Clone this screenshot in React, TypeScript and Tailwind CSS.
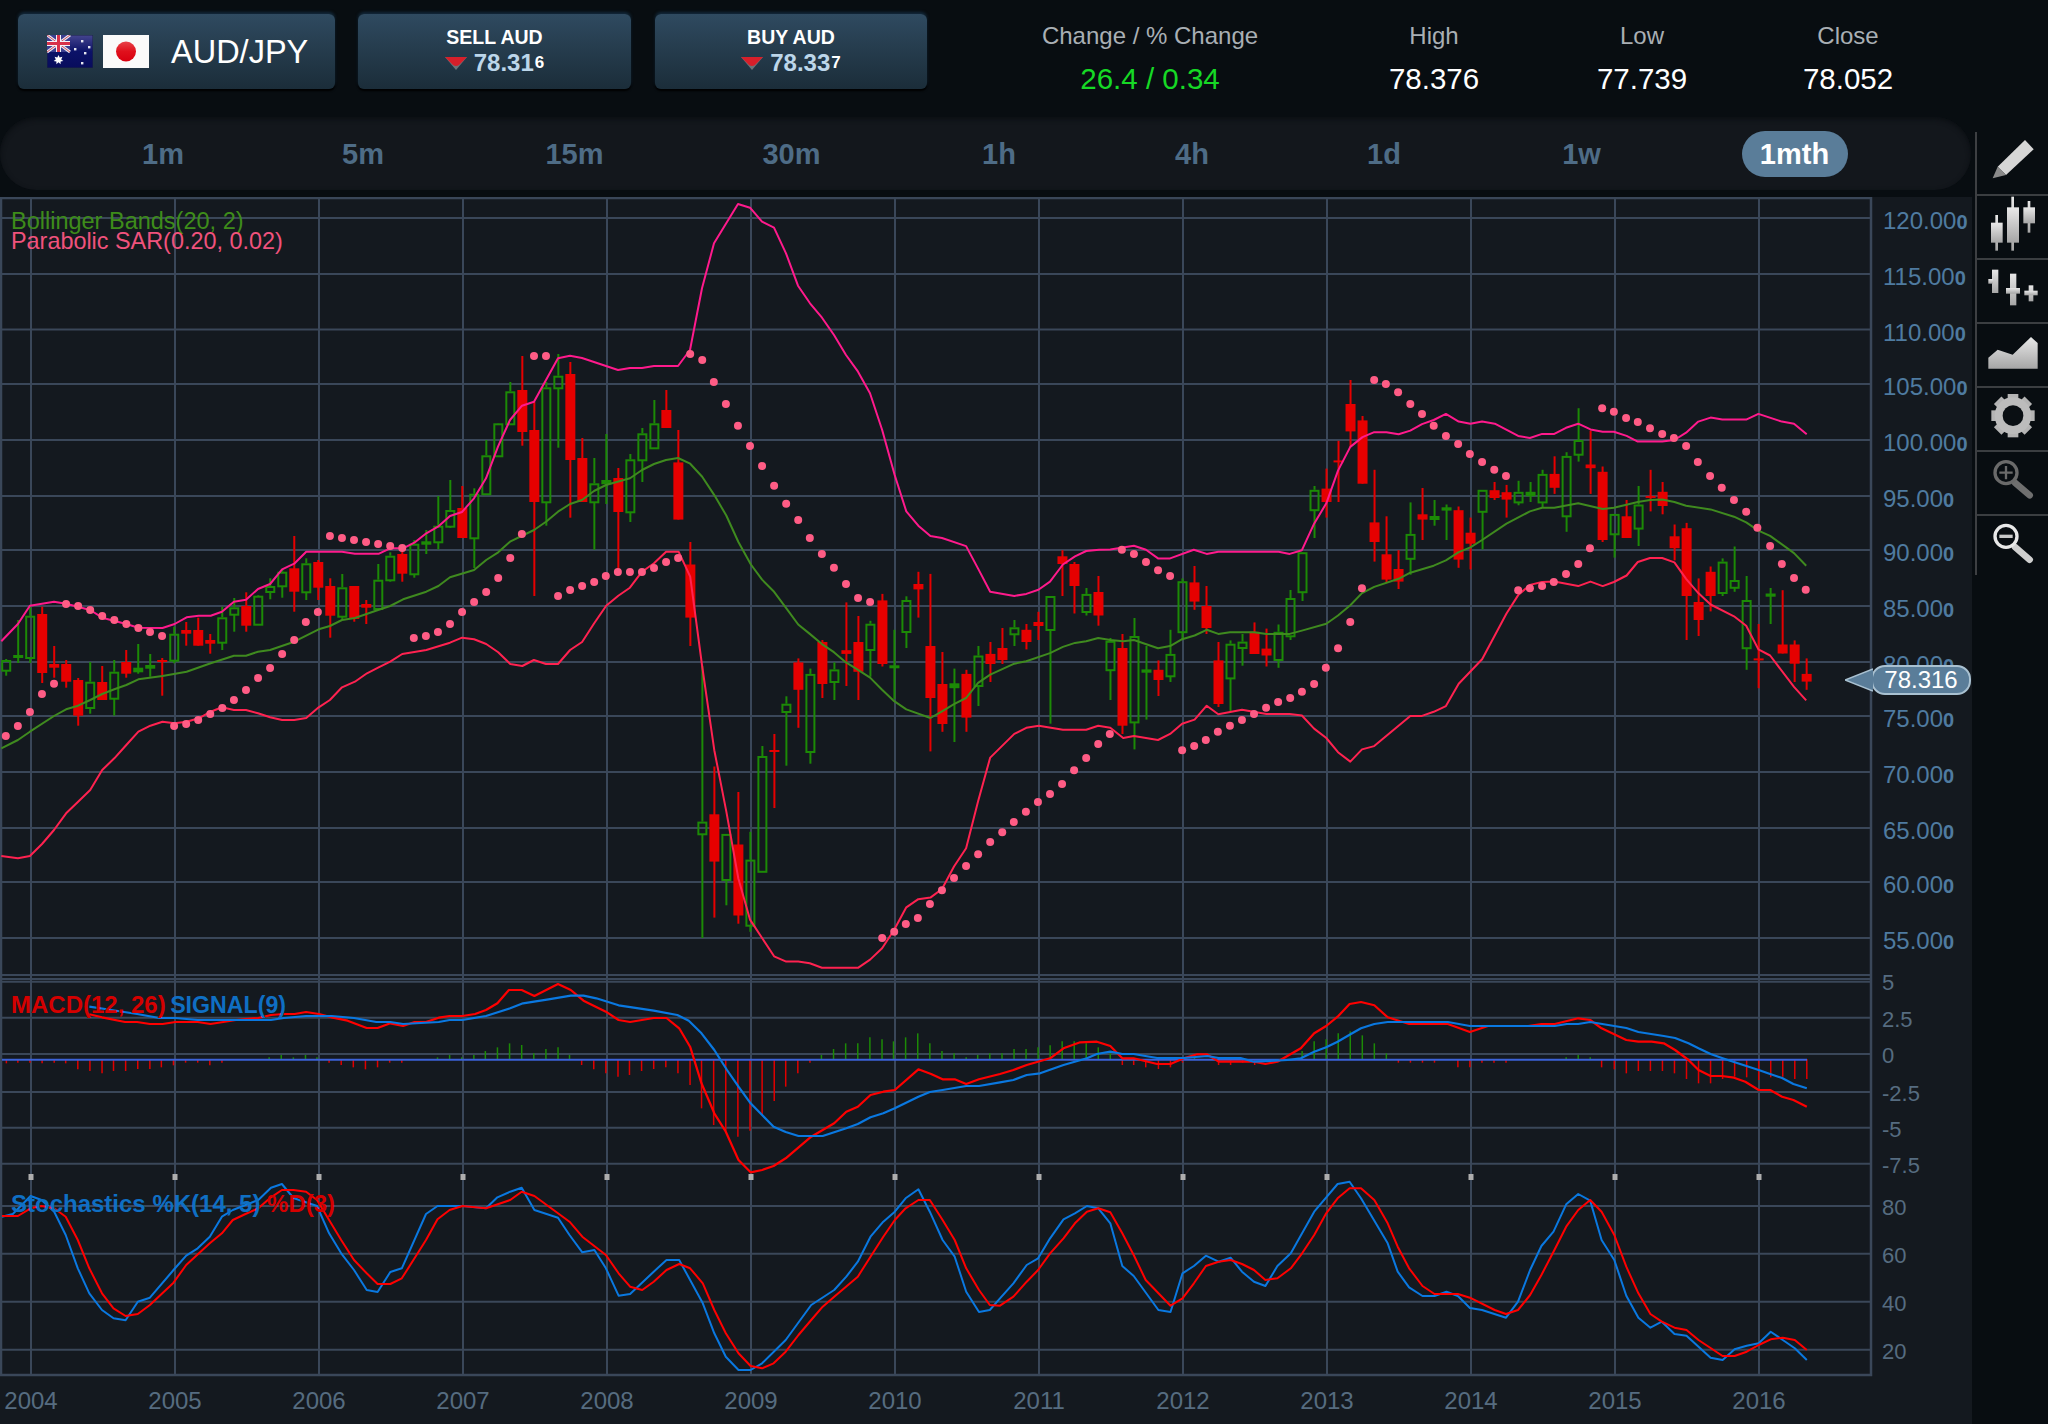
import React from "react";

type Pt = [number, number];

// helpers: the series below were read off crops of the chart, each with its own origin and scale
const pts = (ox: number, oy: number, sx: number, sy: number) => (flat: number[]): Pt[] => {
  const out: Pt[] = [];
  for (let i = 0; i < flat.length; i += 2) out.push([ox + flat[i] / sx, oy + flat[i + 1] / sy]);
  return out;
};
const a = pts(0, 500, 2.24, 3);
const b = pts(600, 340, 2.24, 2.45);
const c = pts(1250, 340, 1.965, 2.45);
const d = pts(330, 330, 3, 3);
const e = pts(660, 195, 3, 3);
const f = pts(0, 960, 1.568, 3);
const g = pts(1000, 960, 1.496, 3);

const toPath = (p: Pt[]) => p.map(([x, y]) => `${x.toFixed(1)},${y.toFixed(1)}`).join(" ");

const BAND_UPPER: Pt[] = [
  ...a([3,424,40,372,67,317,121,305,148,311,202,330,229,353,283,372,310,383,364,384,391,372,418,352,445,347,472,347,497,335,524,305,551,299,578,267,605,252,632,208,659,191,686,155,766,155,795,161,849,161,874,145,903,145,928,128,955,100]),
  ...d([324,590,360,558,396,546,432,505,468,445,504,350,540,270,576,227,612,215,648,150,684,85,720,77,756,84,864,120,900,114,936,114,972,108,1044,108]),
  ...e([90,465,126,280,162,145,234,27,270,38,306,80,342,98,378,175,414,272,450,325,486,368,522,420,558,480,594,530,630,595]),
  ...b([632,220,660,330,686,420,713,455,740,480,766,485,820,505,847,560,874,617,928,627,955,622,982,612,1008,592,1037,550,1064,530,1089,517,1118,514,1143,513,1196,504,1223,514,1250,535,1277,535,1330,514,1359,524,1385,519,1520,519,1545,524]),
  ...c([102,515,126,450,150,400,173,320,197,262,221,238,244,226,268,226,292,231,315,222,338,206,361,196,385,181,410,200,433,205,456,200,481,205,527,235,550,240,574,230,598,230,621,215,645,205,669,219,693,225,715,225,740,235,762,249,810,249,834,245,857,227,881,200,905,190,928,195,975,195,999,181,1045,200,1069,205,1094,231]),
];

const BAND_MID: Pt[] = [
  ...a([3,745,40,720,67,695,121,648,148,628,175,617,202,600,229,582,256,568,283,555,310,538,364,528,418,515,472,490,524,467,551,467,578,455,605,450,659,425,714,388,739,378,766,360,795,354,847,330,874,318,903,298,955,275,982,258,1008,232,1062,210,1089,180,1116,157]),
  ...d([540,635,612,600,648,575,684,545,720,522,756,510,792,483,828,465,900,445,936,420,972,402,1008,390,1044,384]),
  ...b([202,303,229,335,256,380,283,430,310,495,338,550,363,587,390,617,417,657,444,697,470,720,497,745,524,765,551,790,578,808,605,827,632,857,659,885,686,905,740,926,766,910,793,892,820,877,847,840,874,820,928,793,955,787,1008,767,1037,752,1064,742,1089,738,1116,730,1143,735,1172,738,1196,735,1250,755,1277,750,1304,733,1332,724,1359,710,1385,720,1411,716,1465,716,1493,720,1545,720]),
  ...c([102,712,150,695,173,675,197,650,220,620,244,605,292,585,315,570,361,553,385,540,410,520,433,508,456,490,504,450,550,420,574,411,598,411,645,400,693,414,715,411,762,397,786,392,810,391,834,397,857,406,905,415,951,433,975,447,999,467,1022,480,1069,522,1093,553]),
];

const BAND_LOWER: Pt[] = [
  ...a([3,1068,40,1075,67,1068,94,1032,121,990,148,940,175,905,202,870,229,810,256,775,283,735,310,695,337,677,364,665,391,670,418,665,445,655,472,635,497,622,524,630,551,630,578,640,605,652,632,660,659,660,686,654,714,622,739,600,766,562,795,545,822,520,847,503,874,485,901,462,955,450,1008,428,1035,413,1062,418,1089,432,1116,457,1143,492,1170,498,1196,480,1223,492,1250,492,1277,450,1304,426,1331,370,1358,317,1385,287,1411,263,1438,215,1465,190,1492,155,1520,155]),
  ...b([202,580,229,800,256,1005,283,1155,310,1320,336,1420,363,1465,390,1510,417,1523,444,1523,470,1527,497,1538,578,1538,605,1518,632,1490,659,1445,686,1390,713,1370,740,1366,766,1345,793,1290,820,1245,847,1130,874,1023,928,965,955,950,983,945,1037,955,1089,955,1116,945,1143,950,1172,975,1196,970,1250,980,1277,965,1304,940,1332,930,1359,896,1385,917,1438,906,1493,916,1545,916]),
  ...c([102,920,126,952,150,975,173,1010,197,1033,220,1003,244,995,315,921,338,921,361,911,385,897,410,842,456,782,504,670,527,625,550,600,574,593,598,592,645,603,669,592,693,603,715,593,740,577,762,544,786,534,810,534,834,545,857,585,881,620,905,648,951,677,975,700,999,758,1022,773,1069,850,1093,883]),
];

const SAR: Pt[] = [
  ...a([13,708,40,678,67,636,94,582,121,551,148,312,175,318,202,330,229,348,256,360,283,372,310,384,336,396,363,408,390,678,417,672,444,660,471,642,498,624,524,600,551,570,578,534,605,504,632,462,659,420,685,366,712,336,739,108,766,114,793,120,820,126,847,132,874,138,901,144,927,414,954,408,981,396,1008,372,1035,336,1062,306,1089,276,1116,234,1143,174,1169,102,1250,288,1277,270,1304,258,1331,246,1357,228,1384,216,1411,216,1438,216,1465,204,1492,186,1519,174]),
  ...d([612,78,648,78]),
  ...b([202,34,229,49,255,103,282,157,309,210,336,260,363,309,390,357,417,401,444,441,470,485,497,524,524,558,551,598,578,632,605,642,632,1465,659,1450,685,1431,712,1416,739,1382,766,1348,793,1318,820,1289,847,1260,874,1230,901,1206,927,1181,954,1156,981,1132,1008,1112,1035,1088,1062,1054,1089,1024,1116,990,1142,965,1169,514,1196,524,1223,544,1250,564,1277,578,1304,1005,1331,995,1357,980,1384,960,1411,945,1438,931,1465,916,1492,901,1519,887,1546,877]),
  ...c([102,862,126,843,149,803,173,755,197,691,220,608,244,98,267,108,291,128,315,157,338,181,361,210,385,235,409,255,432,279,456,299,480,318,503,333,527,613,550,608,574,603,597,593,621,573,645,549,668,510,692,167,715,176,739,191,762,201,786,216,810,230,833,240,857,260,880,299,904,333,927,362,951,392,975,421,997,460,1022,505,1045,549,1069,583,1092,612]),
];

const MACD: Pt[] = [
  ...f([140,163,160,172,196,186,215,186,235,192,255,192,275,186,310,186,330,192,370,180,405,174,425,165,445,162,462,162,480,156,500,162,520,172,545,182,575,204,592,204,612,190,632,198,650,186,668,186,688,173,705,168,725,168,745,162,762,150,780,130,798,90,818,90,838,108,875,72,895,90,915,122,950,155,970,180,988,186,1025,174,1045,174,1065,205,1082,260,1100,370,1120,460,1138,515,1158,600,1177,637,1195,630,1213,618,1232,595,1272,530,1308,490,1327,455,1345,440,1365,405,1385,395,1403,390,1440,328,1460,342,1478,358,1497,358,1515,372,1535,358,1568,342]),
  ...g([20,330,40,315,75,295,95,265,120,247,145,245,165,258,183,295,200,295,235,312,255,312,275,295,295,283,310,283,327,305,380,305,397,312,415,305,450,265,470,220,488,198,505,170,523,132,540,126,560,136,580,172,612,192,670,192,703,216,730,198,790,198,810,192,830,192,865,175,883,180,900,205,937,240,955,245,975,245,993,250,1010,270,1030,300,1045,330,1063,348,1080,348,1098,353,1115,365,1135,390,1152,390,1170,410,1187,420,1207,440]),
];

const SIGNAL: Pt[] = [
  ...f([140,140,175,150,215,162,250,174,275,174,310,180,425,180,445,174,480,168,520,168,555,174,590,186,612,186,632,192,688,186,705,180,725,180,762,168,800,145,820,130,860,118,895,107,915,107,935,115,970,136,1025,152,1062,165,1080,182,1100,220,1120,270,1140,330,1158,380,1177,430,1195,465,1213,500,1232,516,1252,528,1290,528,1327,505,1345,492,1365,472,1385,460,1403,445,1440,410,1458,396,1478,390,1515,378,1535,378,1568,367]),
  ...g([20,360,40,345,60,340,95,315,130,295,145,282,165,275,183,282,200,282,235,294,275,294,310,288,327,294,360,294,380,305,430,300,450,295,470,275,488,262,505,245,525,222,540,205,560,192,580,186,670,186,703,198,830,198,848,192,865,192,883,186,937,204,955,216,993,228,1010,234,1030,250,1045,265,1063,282,1080,294,1098,306,1135,330,1152,342,1170,354,1187,372,1207,385]),
];

const HISTOGRAM: Pt[] = [
  ...f([10,310,28,308,47,308,66,310,85,308,103,310,122,328,141,333,160,340,178,333,197,333,216,327,235,327,253,322,272,316,291,308,310,308,329,316,348,308,422,292,441,285,460,292,479,285,497,292,516,308,535,315,554,322,573,328,592,322,611,308,630,308,686,292,705,285,724,292,743,285,761,273,780,262,799,250,818,255,837,280,856,267,875,262,893,285,912,315,931,328,950,340,969,350,987,345,1006,333,1025,327,1044,322,1063,340,1082,375,1100,445,1119,495,1138,512,1157,530,1176,512,1195,465,1214,423,1232,380,1251,340,1270,308,1288,285,1307,267,1326,250,1345,250,1364,232,1383,238,1401,244,1420,232,1439,220,1458,250,1477,273,1496,280,1515,292,1533,285,1552,280]),
  ...g([3,280,21,267,39,267,57,262,75,256,93,244,111,244,129,250,147,262,165,280,183,315,200,315,218,322,237,327,255,322,273,308,291,292,327,315,345,315,363,308,381,315,452,273,470,244,488,238,506,220,524,214,542,226,560,250,578,280,596,308,614,308,632,308,650,308,685,322,703,322,721,308,739,308,757,308,847,292,865,285,883,292,900,322,919,328,937,340,955,333,973,333,991,333,1009,340,1027,357,1045,370,1063,370,1081,357,1099,350,1117,352,1135,360,1153,352,1171,350,1189,357,1207,357]),
];

const STOCH_K: Pt[] = [
  ...f([3,770,20,762,48,708,65,720,85,755,103,825,122,925,140,1000,160,1050,178,1075,197,1081,216,1025,235,1013,272,930,292,887,310,865,329,830,348,770,365,750,405,720,425,683,442,672,460,714,497,738,516,820,535,880,555,930,575,990,592,996,612,936,630,925,668,762,686,738,725,738,762,745,780,712,800,695,818,683,838,750,875,773,893,825,913,877,932,870,950,925,970,1007,988,1002,1025,935,1045,900,1065,900,1102,1030,1120,1120,1138,1190,1158,1230,1177,1230,1195,1210,1232,1140,1272,1035,1308,990,1327,950,1345,905,1365,830,1385,785,1403,755,1420,715,1440,688,1458,755,1478,840,1497,890,1515,995,1535,1056,1552,1050,1568,1015]),
  ...g([20,970,40,915,57,895,75,835,95,778,112,760,130,738,147,745,165,790,183,918,200,948,237,1050,255,1056,273,940,290,918,308,887,327,905,345,893,362,935,380,965,397,978,415,918,435,880,470,755,505,672,523,665,540,715,580,850,595,935,612,982,632,1008,650,1008,668,995,685,1008,703,1044,721,1050,757,1073,775,1025,793,930,810,858,828,815,847,733,865,702,883,722,900,840,919,900,937,1007,955,1073,973,1103,990,1085,1009,1122,1027,1127,1063,1193,1081,1200,1099,1168,1117,1157,1135,1150,1153,1115,1171,1140,1189,1165,1207,1200]),
];

const STOCH_D: Pt[] = [
  ...f([3,768,28,768,48,745,65,738,85,745,103,770,122,840,140,925,160,1000,178,1045,197,1068,216,1062,235,1035,272,968,292,915,329,850,348,820,365,780,385,762,405,745,425,712,442,690,460,690,480,695,497,720,516,780,535,840,555,900,575,940,592,972,612,972,630,955,650,895,668,840,686,778,705,750,725,738,762,745,800,720,818,695,838,708,875,760,893,785,913,830,950,885,970,940,988,980,1007,990,1025,965,1045,930,1065,912,1082,925,1102,970,1120,1050,1138,1120,1158,1180,1177,1218,1195,1225,1213,1210,1232,1175,1252,1125,1272,1080,1290,1040,1308,1010,1345,950,1365,890,1385,830,1403,780,1420,745,1440,720,1458,720,1478,780,1497,840,1515,925,1535,990,1552,1035,1568,1037]),
  ...g([20,1010,40,965,57,930,75,880,95,835,112,790,130,755,147,745,165,757,183,820,200,885,218,960,255,1037,273,1015,290,970,308,918,327,905,345,900,362,912,380,930,397,960,415,955,435,925,452,880,470,825,488,760,505,715,523,685,540,685,560,720,580,790,595,860,612,925,632,978,650,1002,685,1002,703,1013,740,1050,757,1062,775,1050,793,1005,810,945,828,875,847,800,865,750,883,720,900,755,919,825,937,920,955,1000,973,1062,990,1085,1009,1103,1027,1110,1045,1140,1081,1188,1099,1188,1117,1175,1135,1155,1153,1138,1171,1133,1189,1140,1207,1170]),
];

// [green?, high, body top, body bottom, low], one per month from Nov 2003
const CANDLES: [number, number, number, number, number][] = [
  [1,659,660,670.7,675.7],[1,620,655,657,663],[1,607,615.7,658,663],[0,606.7,614,673,683],[0,646,664,667.7,677.7],[0,660,664,681.7,687.7],[0,678,680,715.7,725.7],[1,662,681.7,708,713.7],[0,666,682,700,700],[1,660,671.7,698.7,715.7],
  [0,650,662,673.7,677.7],[1,644,667.7,672.3,673.7],[1,654,665,668.7,676.7],[0,658,660,661.7,695.7],[1,626.7,633.7,660.7,663.3],[0,622,630,633.7,645.7],[0,617.7,630,645.7,645.7],[0,634,640,643.7,653.7],[1,606.7,617.3,642.7,650],[1,598,607.3,614.7,631.7],
  [0,592.3,606,625.7,631.7],[1,595,595.7,624.7,624.7],[1,578.3,586,592,599.3],[1,569,571.7,586.3,597.7],[0,536,568.3,591.7,611.7],[1,558.3,563.3,592.3,600],[0,560,562,587.7,600],[0,578.3,586,615.7,637.7],[1,574,587.3,616.7,619.3],[0,586,586,619,621.7],
  [0,600,604,607.7,624],[1,564,579.7,609,609],[1,552.3,555.7,580.3,581.7],[0,552,554,573.7,581.7],[1,540,543.7,574.3,577.7],[1,530,541.3,544.7,554],[1,496,525.7,542.3,549.3],[1,480,510,526.7,528],[0,486,508,538,538],[1,488.3,493.7,538.3,568],
  [1,440,455.3,494.3,494.3],[1,423,423.3,456.3,456.3],[1,382,391.3,424.3,424.3],[0,356,390,432,445.7],[0,402,430,502,596],[1,382,387.3,502.3,525.7],[1,354,375.7,388.3,447.7],[0,362,374,460,517.7],[0,438,458,502,502],[1,458,483.3,502.3,549.7],
  [1,434,480,484.3,504],[0,468,478,512,568.6],[1,454,459.3,512.3,522],[1,428,433.3,460.3,482],[1,400,423.3,448.3,448.3],[0,390,410,428,428],[0,430,462.4,519.6,519.6],[0,542,564.5,617.6,646],[1,666,821.6,834.3,938],[0,766.5,814.3,861.6,917.6],
  [1,833.9,833.9,880,905.3],[0,792,844.5,915.5,923.7],[1,831.8,859.6,925.7,931.8],[1,746,756,871.8,871.8],[0,734,750,751.4,808],[1,696.3,703.7,712,765.7],[0,658.4,662.4,689.8,727.8],[1,668.6,673.9,752,763.7],[0,640,642,684,698],[1,662.4,669.4,682,700],
  [0,602.4,650.2,653.9,686],[0,616,642,671.8,700],[1,620.8,623.7,650,676.7],[0,593.9,600.4,664,666.5],[1,629.8,665.3,666.5,699],[1,596.3,600,632,648],[0,571.8,584,589.4,617.6],[0,573.9,646,698,751.4],[0,652,684,724,731.8],[1,668.6,683.3,688.2,742],
  [0,669.8,673.9,717.6,731.8],[1,646,655.5,686,706],[0,642,653.9,664,682],[0,628,648,660,664],[1,620,627.3,634.3,646],[0,624,629.8,642,649.4],[0,611.8,622,626,640],[1,596,596,630,723.7],[0,550.2,556.3,564,596],[0,562,564,586,613.5],
  [1,588,593.9,612,615.5],[0,576,592,615.5,625.7],[1,638,640.8,670.2,700],[0,634,648,725.7,734],[1,618,636,722.4,749.4],[1,646,669.4,672.7,719.6],[0,660.4,669.8,680,696],[1,629.8,653.9,676.3,682],[1,578.4,581.2,632.2,640],[0,566,582.4,601.6,609.8],
  [0,586,606,628,634],[0,642,660.4,704,707],[1,640.4,643.7,678.4,711.4],[1,634,641.6,648,665.7],[0,622.4,631.8,654,654],[0,628.6,648.6,655.5,666.5],[1,624.5,631.8,660,667.8],[1,590,598,636.3,640],[1,552,552.2,592.2,601],[1,486,489.8,510.2,538],
  [0,468.6,488.6,502,517.6],[0,440.8,460.4,461.2,502],[0,380,404,431.4,447],[0,416,420.4,483.7,483.7],[0,469.8,522.4,542,561.6],[0,516.3,554.3,579.6,582.9],[0,550.2,569,581.6,589],[1,502.4,533.9,558.8,574.7],[0,488,514.3,519.6,540],[1,500,516,520,525.7],
  [1,504.5,507.3,510.6,540],[0,506.5,510.2,559.6,567.8],[0,517.6,532.7,543.7,569.4],[1,489.8,489.8,511.8,549.4],[0,482,490.2,498,500],[0,484.9,492.2,499.6,517.6],[1,480.8,491.8,502.4,505.3],[1,482,491.8,496.3,502],[1,469.8,473.9,502.4,507.3],[0,456.3,473.9,487.8,493.9],
  [1,452.2,455.9,516.3,531.8],[1,408.2,440,454.7,461.6],[0,430.6,464.5,468.2,493.9],[0,466.5,471.8,540,542],[1,513.9,513.9,534.3,557.6],[0,500,516.3,538,538],[1,486,504.5,528.6,546],[0,469.8,495.9,497.6,511.4],[0,482,491.8,506,514.3],[0,524.5,536.3,548.2,560.4],
  [0,522.9,528.2,596,640],[0,578.4,602,620,636],[0,566.5,571.8,596,611.4],[1,558.4,561.6,593,596],[1,546.5,580,587.8,591.8],[1,576,600,648.2,669.8],[0,624,658.4,659.2,688.2],[1,588,593.5,596.7,624],[0,590.2,644.5,653.5,653.5],[0,640.4,644.5,663.7,682],
  [0,658.4,673.9,681.6,689.8],
];

const YEARS = [2004, 2005, 2006, 2007, 2008, 2009, 2010, 2011, 2012, 2013, 2014, 2015, 2016];
const yearX = (i: number) => 31 + 144 * i;

const PRICE_TICKS: [string, number][] = [
  ["120.00", 218], ["115.00", 274], ["110.00", 329.5], ["105.00", 384], ["100.00", 440], ["95.00", 496], ["90.00", 550],
  ["85.00", 606], ["80.00", 662], ["75.00", 716], ["70.00", 772], ["65.00", 828], ["60.00", 882], ["55.00", 938],
];
const LOWER_TICKS: [string, number, boolean][] = [
  ["5", 981, false], ["2.5", 1017.7, true], ["0", 1054, true], ["-2.5", 1092, true], ["-5", 1127.7, true], ["-7.5", 1163.7, true],
  ["80", 1206, true], ["60", 1253.7, true], ["40", 1301.7, true], ["20", 1349.7, true],
];
const EXTRA_LINES = [975, 979, 981.7];

const TABS = [
  { label: "1m", width: "w-[200px]" },
  { label: "5m", width: "w-[200px]" },
  { label: "15m", width: "w-[223px]" },
  { label: "30m", width: "w-[211px]" },
  { label: "1h", width: "w-[204px]" },
  { label: "4h", width: "w-[182px]" },
  { label: "1d", width: "w-[202px]" },
  { label: "1w", width: "w-[193px]" },
  { label: "1mth", width: "w-[233px]", active: true },
];

function AussieFlag() {
  return (
    <svg viewBox="0 0 46 33" className="w-[46px] h-[33px] shrink-0">
      <defs>
        <linearGradient id="au-bg" x1="0" y1="0" x2="0" y2="1">
          <stop offset="0" stopColor="#45458f" />
          <stop offset="0.5" stopColor="#0c1268" />
          <stop offset="1" stopColor="#080c5c" />
        </linearGradient>
      </defs>
      <rect width="46" height="33" fill="url(#au-bg)" stroke="#1a2440" />
      <rect width="23" height="17" fill="#3c3f90" />
      <path d="M0 0 L23 17 M23 0 L0 17" stroke="#e8e8f0" strokeWidth="3" />
      <path d="M0 0 L23 17 M23 0 L0 17" stroke="#d05060" strokeWidth="1" />
      <path d="M11.5 0 V17 M0 8.5 H23" stroke="#f4f4f8" strokeWidth="5" />
      <path d="M11.5 0 V17 M0 8.5 H23" stroke="#d8324a" strokeWidth="3" />
      <path d="M11.5 20 l1.2 2.6 2.7 -0.8 -1.2 2.6 2.2 1.6 -2.8 0.4 0 2.8 -2.1 -1.9 -2.1 1.9 0 -2.8 -2.8 -0.4 2.2 -1.6 -1.2 -2.6 2.7 0.8z" fill="#fff" />
      <g fill="#e6e6f0">
        <rect x="34" y="5" width="2.4" height="2.4" />
        <rect x="27" y="13" width="2.4" height="2.4" />
        <rect x="41" y="11" width="2.4" height="2.4" />
        <rect x="37" y="17" width="2.4" height="2.4" />
        <rect x="34" y="27" width="2.4" height="2.4" />
      </g>
    </svg>
  );
}

function JapanFlag() {
  return (
    <svg viewBox="0 0 46 33" className="w-[46px] h-[33px] shrink-0">
      <defs>
        <linearGradient id="jp-dot" x1="0" y1="0" x2="0" y2="1">
          <stop offset="0" stopColor="#e8434a" />
          <stop offset="0.5" stopColor="#e0101c" />
          <stop offset="1" stopColor="#d80010" />
        </linearGradient>
      </defs>
      <rect width="46" height="33" fill="#fafafa" />
      <circle cx="23" cy="16.5" r="10" fill="url(#jp-dot)" />
    </svg>
  );
}

function DownArrow() {
  return (
    <svg viewBox="0 0 22 13" className="w-[22px] h-[13px] shrink-0">
      <path d="M0 0 H22 L11 13 Z" fill="#6b7278" />
      <path d="M0 0 H22 L14 8 Q11 10 8 8 Z" fill="#d71f2a" />
    </svg>
  );
}

function QuoteButton({ label, price, tail, width, ml }: { label: string; price: string; tail: string; width: string; ml: string }) {
  return (
    <div className={`${width} ${ml} h-[75px] rounded-[6px] bg-gradient-to-b from-[#2f4a60] to-[#1b2d39] shadow-[0_-2px_3px_#12283a,0_2px_2px_#000] flex flex-col items-center pt-[13px]`}>
      <div className="text-[19.5px] leading-[20px] font-bold text-white">{label}</div>
      <div className="flex items-center mt-[3px] leading-[26px]">
        <DownArrow />
        <span className="ml-[7px] text-[24px] font-bold text-[#bcd6ea]">{price}</span>
        <span className="ml-[1px] text-[17px] font-bold text-white">{tail}</span>
      </div>
    </div>
  );
}

function Stat({ label, value, width, ml, valueClass = "text-white" }: { label: string; value: string; width: string; ml: string; valueClass?: string }) {
  return (
    <div className={`${width} ${ml} flex flex-col items-center pt-[7px]`}>
      <div className="text-[24px] leading-[30px] text-[#a9afb4]">{label}</div>
      <div className={`mt-[13px] text-[29.5px] leading-[30px] ${valueClass}`}>{value}</div>
    </div>
  );
}

function ChartSvg() {
  return (
    <svg viewBox="0 197 1972 1227" className="w-[1972px] h-[1227px] block">
      <g stroke="#3a4759" strokeWidth="2" fill="none">
        {PRICE_TICKS.map(([, y]) => <line key={y} x1="0" x2="1871" y1={y} y2={y} />)}
        {LOWER_TICKS.filter((t) => t[2]).map(([, y]) => <line key={y} x1="0" x2="1871" y1={y} y2={y} />)}
        {EXTRA_LINES.map((y) => <line key={y} x1="0" x2="1871" y1={y} y2={y} />)}
        {YEARS.map((_, i) => <line key={i} x1={yearX(i)} x2={yearX(i)} y1="197" y2="1375" />)}
        <rect x="1" y="198" width="1870" height="1177" strokeWidth="2.5" />
      </g>

      {CANDLES.map(([up, hi, top, bot, lo], i) => {
        const x = 6.2 + 12.003 * i;
        if (up && bot - top < 5) {
          return (
            <g key={i} fill="#1c8a06">
              <rect x={x - 1} y={hi} width="2" height={lo - hi} />
              <rect x={x - 5} y={top} width="10" height={Math.max(bot - top, 3)} />
            </g>
          );
        }
        if (up) {
          return (
            <g key={i} fill="none" stroke="#1c8a06" strokeWidth="2">
              <line x1={x} x2={x} y1={hi} y2={top} />
              <line x1={x} x2={x} y1={bot} y2={lo} />
              <rect x={x - 4} y={top + 1} width="8" height={bot - top - 1} />
            </g>
          );
        }
        return (
          <g key={i} fill="#e60000">
            <rect x={x - 1} y={hi} width="2" height={lo - hi} />
            <rect x={x - 5} y={top} width="10" height={Math.max(bot - top, 2)} />
          </g>
        );
      })}

      <g fill="none" strokeWidth="2" strokeLinejoin="round">
        <polyline points={toPath(BAND_MID)} stroke="#3f8a1f" />
        <polyline points={toPath(BAND_UPPER)} stroke="#ff1a8c" />
        <polyline points={toPath(BAND_LOWER)} stroke="#ff2250" />
      </g>
      {SAR.map(([x, y], i) => <circle key={i} cx={x} cy={y} r="4" fill="#ff5c85" />)}

      {HISTOGRAM.map(([x, y], i) => (
        <line key={i} x1={x} x2={x} y1={y} y2="1059" stroke={y < 1059 ? "#1c8a06" : "#e00000"} strokeWidth="1.5" />
      ))}
      <line x1="2" x2="1807" y1="1059.7" y2="1059.7" stroke="#3b62d8" strokeWidth="2" />
      <g fill="none" strokeLinejoin="round">
        <polyline points={toPath(MACD)} stroke="#ff0000" strokeWidth="2.2" />
        <polyline points={toPath(SIGNAL)} stroke="#0a78e0" strokeWidth="2.2" />
        <polyline points={toPath(STOCH_K)} stroke="#0a78e0" strokeWidth="2" />
        <polyline points={toPath(STOCH_D)} stroke="#ff0000" strokeWidth="2" />
      </g>

      {YEARS.map((_, i) => <rect key={i} x={yearX(i) - 2.5} y="1174" width="5" height="6" fill="#aeaeae" />)}

      {PRICE_TICKS.map(([t, y]) => (
        <text key={t} x="1883" y={y + 11} className="fill-[#4f7ba0] text-[24px]">
          {t}
          <tspan className="font-bold text-[20px]">0</tspan>
        </text>
      ))}
      {LOWER_TICKS.map(([t, y]) => (
        <text key={t} x="1882" y={y + 9} className="fill-[#566c80] text-[22px]">{t}</text>
      ))}
      {YEARS.map((year, i) => (
        <text key={year} x={yearX(i)} y="1409" textAnchor="middle" className="fill-[#566c80] text-[24px]">{year}</text>
      ))}
    </svg>
  );
}

function PriceFlag() {
  return (
    <div className="absolute left-[1845px] top-[468px] flex items-center">
      <svg viewBox="0 0 28 24" className="w-[28px] h-[24px] -mr-[2px] relative z-10">
        <path d="M0 12 L28 1 V23 Z" fill="#5a7d99" />
        <path d="M28 1 L0 12 L28 23" fill="none" stroke="#a9c1d1" strokeWidth="1.5" />
      </svg>
      <div className="w-[100px] h-[30px] rounded-[14px] border-2 border-[#a9c1d1] bg-[#5a7d99] text-white text-[24px] leading-[26px] text-center">78.316</div>
    </div>
  );
}

const iconFill = "url(#tool-grey)";

function ToolIcon({ top, children }: { top: number; children: React.ReactNode }) {
  return (
    <div className="w-full h-[64px] border-b-2 border-[#3b3e41] flex items-center justify-center last:border-b-0">
      <svg viewBox={`306 ${top} 180 186`} className="w-[60px] h-[62px] block">
        {children}
      </svg>
    </div>
  );
}

function Toolbar() {
  return (
    <div className="w-[76px] pt-[15px] pl-[3px]">
      <svg className="w-0 h-0 absolute">
        <defs>
          <linearGradient id="tool-grey" gradientUnits="objectBoundingBox" x1="0" y1="0" x2="0" y2="1">
            <stop offset="0" stopColor="#e8e8e8" />
            <stop offset="1" stopColor="#a6a6a6" />
          </linearGradient>
        </defs>
      </svg>
      <div className="border-l-2 border-[#3d3f42] flex flex-col h-[443px]">
        <ToolIcon top={36}>
          <path d="M350 140 L432 60 L458 88 L375 165 Z" fill="#d6d6d6" />
          <path d="M335 175 L350 140 L375 165 Z" fill="#8a8a8a" />
        </ToolIcon>
        <ToolIcon top={228}>
          <g fill={iconFill}>
            <rect x="343" y="285" width="8" height="107" />
            <rect x="391" y="230" width="8" height="162" />
            <rect x="440" y="243" width="8" height="95" />
            <rect x="330" y="308" width="35" height="60" />
            <rect x="378" y="262" width="36" height="106" />
            <rect x="427" y="262" width="35" height="48" />
          </g>
        </ToolIcon>
        <ToolIcon top={421}>
          <g fill={iconFill}>
            <rect x="333" y="450" width="19" height="70" />
            <rect x="322" y="478" width="14" height="14" />
            <rect x="387" y="462" width="19" height="95" />
            <rect x="375" y="505" width="42" height="17" />
            <rect x="443" y="497" width="14" height="48" />
            <rect x="430" y="513" width="40" height="14" />
          </g>
        </ToolIcon>
        <ToolIcon top={611}>
          <path d="M322 745 V712 L350 688 L395 703 L450 650 L470 668 V745 Z" fill={iconFill} />
        </ToolIcon>
        <ToolIcon top={804}>
          <g fill="#b4b4b4">
            {[0, 45, 90, 135].map((r) => (
              <rect key={r} x="380" y="822" width="32" height="130" transform={`rotate(${r} 396 887)`} />
            ))}
          </g>
          <circle cx="396" cy="887" r="43" fill="none" stroke="#bcbcbc" strokeWidth="24" />
          <circle cx="396" cy="887" r="31" fill="#0a0f13" />
        </ToolIcon>
        <ToolIcon top={998}>
          <line x1="402" y1="1090" x2="446" y2="1128" stroke="#6f6f6f" strokeWidth="20" strokeLinecap="round" />
          <circle cx="375" cy="1060" r="33" fill="none" stroke="#6a6a6a" strokeWidth="10" />
          <path d="M355 1060 H395 M375 1040 V1080" stroke="#6a6a6a" strokeWidth="7" />
        </ToolIcon>
        <ToolIcon top={1189}>
          <line x1="402" y1="1282" x2="446" y2="1320" stroke="#cfcfcf" strokeWidth="20" strokeLinecap="round" />
          <circle cx="375" cy="1250" r="33" fill="none" stroke="#e8e8e8" strokeWidth="10" />
          <path d="M355 1250 H395" stroke="#c8c8c8" strokeWidth="10" />
        </ToolIcon>
      </div>
    </div>
  );
}

export default function App() {
  return (
    <div className="w-[2048px] h-[1424px] overflow-hidden bg-[#080d11] font-['Liberation_Sans',Arial,sans-serif] text-white">
      <div className="flex h-[117px] pt-[14px] pl-[18px]">
        <div className="w-[317px] h-[75px] rounded-[6px] bg-gradient-to-b from-[#2f4a60] to-[#1b2d39] shadow-[0_-2px_3px_#12283a,0_2px_2px_#000] flex items-center pl-[29px]">
          <AussieFlag />
          <div className="ml-[10px]"><JapanFlag /></div>
          <span className="ml-[22px] mt-[2px] text-[32.5px] leading-none">AUD/JPY</span>
        </div>
        <QuoteButton label="SELL AUD" price="78.31" tail="6" width="w-[273px]" ml="ml-[23px]" />
        <QuoteButton label="BUY AUD" price="78.33" tail="7" width="w-[272px]" ml="ml-[24px]" />
        <Stat label="Change / % Change" value="26.4 / 0.34" width="w-[240px]" ml="ml-[103px]" valueClass="text-[#16d925]" />
        <Stat label="High" value="78.376" width="w-[160px]" ml="ml-[84px]" />
        <Stat label="Low" value="77.739" width="w-[160px]" ml="ml-[48px]" />
        <Stat label="Close" value="78.052" width="w-[160px]" ml="ml-[46px]" />
      </div>

      <div className="flex">
        <div className="w-[1972px]">
          <div className="h-[73px] mr-[1px] rounded-[36px] bg-[#13171c] shadow-[inset_0_2px_5px_#0a0e12] flex items-center pl-[63px]">
            {TABS.map((tab) => (
              <div key={tab.label} className={`${tab.width} flex justify-center`}>
                <span className={tab.active ? "w-[106px] h-[46px] rounded-full bg-[#5a7d99] text-white text-[29px] font-bold leading-[46px] text-center" : "text-[#4e6c86] text-[29px] font-bold leading-[46px]"}>
                  {tab.label}
                </span>
              </div>
            ))}
          </div>
          <div className="mt-[7px] relative bg-[#14191f]">
            <ChartSvg />
            <div className="absolute left-[11px] top-[12px] text-[23.5px] leading-[24px] text-[#3e8c1a]">Bollinger Bands(20, 2)</div>
            <div className="absolute left-[11px] top-[32px] text-[23.4px] leading-[24px] text-[#f0527c]">Parabolic SAR(0.20, 0.02)</div>
            <div className="absolute left-[11px] top-[796px] leading-[24px] font-bold">
              <span className="text-[24px] text-[#d50000]">MACD(12, 26)</span> <span className="text-[23.2px] text-[#0f6fc4]">SIGNAL(9)</span>
            </div>
            <div className="absolute left-[11px] top-[995px] text-[24px] leading-[24px] font-bold">
              <span className="text-[#0f6fc4]">Stochastics %K(14, 5)</span> <span className="text-[#d50000]">%D(3)</span>
            </div>
            <PriceFlag />
          </div>
        </div>
        <Toolbar />
      </div>
    </div>
  );
}
